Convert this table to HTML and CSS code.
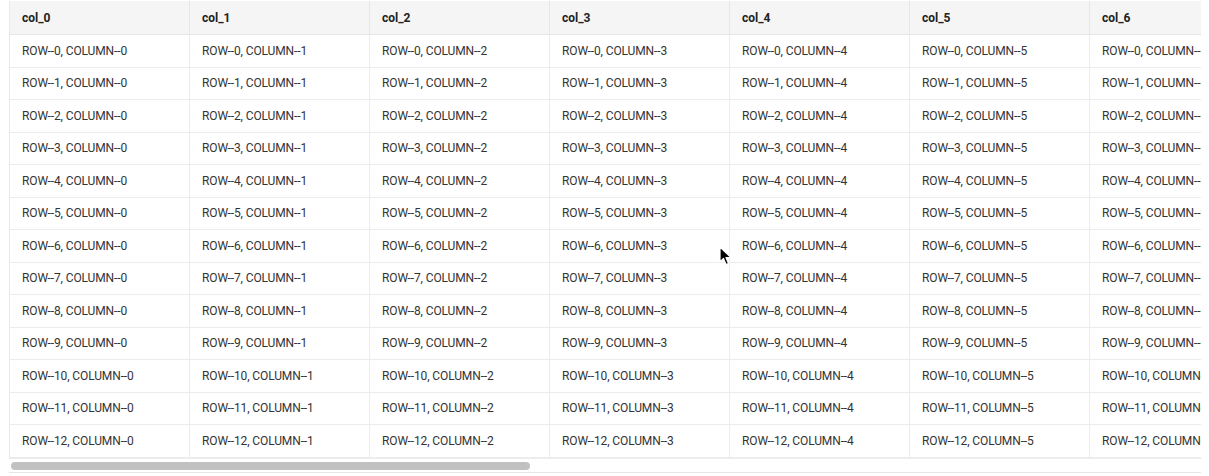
FILE: index.html
```html
<!DOCTYPE html>
<html>
<head>
<meta charset="utf-8">
<link rel="stylesheet" href="styles.css">
</head>
<body>
<div class="grid">
  <div class="viewport">
    <div class="row header">
      <div class="cell">col_0</div><div class="cell">col_1</div><div class="cell">col_2</div><div class="cell">col_3</div><div class="cell">col_4</div><div class="cell">col_5</div><div class="cell">col_6</div><div class="cell">col_7</div>
    </div>
    <div class="row"><div class="cell">ROW--0, COLUMN--0</div><div class="cell">ROW--0, COLUMN--1</div><div class="cell">ROW--0, COLUMN--2</div><div class="cell">ROW--0, COLUMN--3</div><div class="cell">ROW--0, COLUMN--4</div><div class="cell">ROW--0, COLUMN--5</div><div class="cell">ROW--0, COLUMN--6</div><div class="cell">ROW--0, COLUMN--7</div></div>
    <div class="row"><div class="cell">ROW--1, COLUMN--0</div><div class="cell">ROW--1, COLUMN--1</div><div class="cell">ROW--1, COLUMN--2</div><div class="cell">ROW--1, COLUMN--3</div><div class="cell">ROW--1, COLUMN--4</div><div class="cell">ROW--1, COLUMN--5</div><div class="cell">ROW--1, COLUMN--6</div><div class="cell">ROW--1, COLUMN--7</div></div>
    <div class="row"><div class="cell">ROW--2, COLUMN--0</div><div class="cell">ROW--2, COLUMN--1</div><div class="cell">ROW--2, COLUMN--2</div><div class="cell">ROW--2, COLUMN--3</div><div class="cell">ROW--2, COLUMN--4</div><div class="cell">ROW--2, COLUMN--5</div><div class="cell">ROW--2, COLUMN--6</div><div class="cell">ROW--2, COLUMN--7</div></div>
    <div class="row"><div class="cell">ROW--3, COLUMN--0</div><div class="cell">ROW--3, COLUMN--1</div><div class="cell">ROW--3, COLUMN--2</div><div class="cell">ROW--3, COLUMN--3</div><div class="cell">ROW--3, COLUMN--4</div><div class="cell">ROW--3, COLUMN--5</div><div class="cell">ROW--3, COLUMN--6</div><div class="cell">ROW--3, COLUMN--7</div></div>
    <div class="row"><div class="cell">ROW--4, COLUMN--0</div><div class="cell">ROW--4, COLUMN--1</div><div class="cell">ROW--4, COLUMN--2</div><div class="cell">ROW--4, COLUMN--3</div><div class="cell">ROW--4, COLUMN--4</div><div class="cell">ROW--4, COLUMN--5</div><div class="cell">ROW--4, COLUMN--6</div><div class="cell">ROW--4, COLUMN--7</div></div>
    <div class="row"><div class="cell">ROW--5, COLUMN--0</div><div class="cell">ROW--5, COLUMN--1</div><div class="cell">ROW--5, COLUMN--2</div><div class="cell">ROW--5, COLUMN--3</div><div class="cell">ROW--5, COLUMN--4</div><div class="cell">ROW--5, COLUMN--5</div><div class="cell">ROW--5, COLUMN--6</div><div class="cell">ROW--5, COLUMN--7</div></div>
    <div class="row"><div class="cell">ROW--6, COLUMN--0</div><div class="cell">ROW--6, COLUMN--1</div><div class="cell">ROW--6, COLUMN--2</div><div class="cell">ROW--6, COLUMN--3</div><div class="cell">ROW--6, COLUMN--4</div><div class="cell">ROW--6, COLUMN--5</div><div class="cell">ROW--6, COLUMN--6</div><div class="cell">ROW--6, COLUMN--7</div></div>
    <div class="row"><div class="cell">ROW--7, COLUMN--0</div><div class="cell">ROW--7, COLUMN--1</div><div class="cell">ROW--7, COLUMN--2</div><div class="cell">ROW--7, COLUMN--3</div><div class="cell">ROW--7, COLUMN--4</div><div class="cell">ROW--7, COLUMN--5</div><div class="cell">ROW--7, COLUMN--6</div><div class="cell">ROW--7, COLUMN--7</div></div>
    <div class="row"><div class="cell">ROW--8, COLUMN--0</div><div class="cell">ROW--8, COLUMN--1</div><div class="cell">ROW--8, COLUMN--2</div><div class="cell">ROW--8, COLUMN--3</div><div class="cell">ROW--8, COLUMN--4</div><div class="cell">ROW--8, COLUMN--5</div><div class="cell">ROW--8, COLUMN--6</div><div class="cell">ROW--8, COLUMN--7</div></div>
    <div class="row"><div class="cell">ROW--9, COLUMN--0</div><div class="cell">ROW--9, COLUMN--1</div><div class="cell">ROW--9, COLUMN--2</div><div class="cell">ROW--9, COLUMN--3</div><div class="cell">ROW--9, COLUMN--4</div><div class="cell">ROW--9, COLUMN--5</div><div class="cell">ROW--9, COLUMN--6</div><div class="cell">ROW--9, COLUMN--7</div></div>
    <div class="row"><div class="cell">ROW--10, COLUMN--0</div><div class="cell">ROW--10, COLUMN--1</div><div class="cell">ROW--10, COLUMN--2</div><div class="cell">ROW--10, COLUMN--3</div><div class="cell">ROW--10, COLUMN--4</div><div class="cell">ROW--10, COLUMN--5</div><div class="cell">ROW--10, COLUMN--6</div><div class="cell">ROW--10, COLUMN--7</div></div>
    <div class="row"><div class="cell">ROW--11, COLUMN--0</div><div class="cell">ROW--11, COLUMN--1</div><div class="cell">ROW--11, COLUMN--2</div><div class="cell">ROW--11, COLUMN--3</div><div class="cell">ROW--11, COLUMN--4</div><div class="cell">ROW--11, COLUMN--5</div><div class="cell">ROW--11, COLUMN--6</div><div class="cell">ROW--11, COLUMN--7</div></div>
    <div class="row"><div class="cell">ROW--12, COLUMN--0</div><div class="cell">ROW--12, COLUMN--1</div><div class="cell">ROW--12, COLUMN--2</div><div class="cell">ROW--12, COLUMN--3</div><div class="cell">ROW--12, COLUMN--4</div><div class="cell">ROW--12, COLUMN--5</div><div class="cell">ROW--12, COLUMN--6</div><div class="cell">ROW--12, COLUMN--7</div></div>
    <div class="row"><div class="cell">ROW--13, COLUMN--0</div><div class="cell">ROW--13, COLUMN--1</div><div class="cell">ROW--13, COLUMN--2</div><div class="cell">ROW--13, COLUMN--3</div><div class="cell">ROW--13, COLUMN--4</div><div class="cell">ROW--13, COLUMN--5</div><div class="cell">ROW--13, COLUMN--6</div><div class="cell">ROW--13, COLUMN--7</div></div>
  </div>
  <div class="scrollbar"><div class="thumb"></div></div>
  <svg class="cursor" width="14" height="20" viewBox="0 0 14 20"><path d="M1 1 L1 16 L4.5 12.5 L7 18.5 L9.5 17.5 L7 11.5 L12 11.5 Z" fill="#000" stroke="#fff" stroke-width="1.2" stroke-linejoin="round"/></svg>
</div>
</body>
</html>
```

FILE: styles.css
```css
html, body {
  margin: 0;
  padding: 0;
  background: #fff;
}
body {
  font-family: Roboto, "Liberation Sans", sans-serif;
  font-size: 12px;
  color: #333;
}
.grid {
  position: relative;
  margin: 1px 0 0 9px;
  width: 1192px;
}
.viewport {
  height: 457px;
  overflow: hidden;
  border-left: 1px solid #e8e8e8;
}
.row {
  display: flex;
  height: 32.5px;
  box-sizing: border-box;
  border-bottom: 1px solid #ececec;
  background: #fff;
  letter-spacing: -0.12px;
}
.row.header {
  height: 34px;
  background: #f5f5f5;
  border-bottom: 1px solid #e6e6e6;
  font-weight: 700;
  color: #222;
  letter-spacing: 0;
}
.cell {
  flex: 0 0 180px;
  box-sizing: border-box;
  border-right: 1px solid #ececec;
  padding: 0 12px;
  display: flex;
  align-items: center;
  white-space: nowrap;
  overflow: hidden;
}
.header .cell {
  border-right-color: #e6e6e6;
}
.scrollbar {
  height: 15px;
  box-sizing: border-box;
  border-top: 1px solid #ececec;
  border-bottom: 1px solid #e6e6e6;
  padding: 3px 0 0 2px;
}
.thumb {
  width: 519px;
  height: 8px;
  border-radius: 4px;
  background: #c1c1c1;
}
.cursor {
  position: absolute;
  left: 710px;
  top: 245px;
}
```
